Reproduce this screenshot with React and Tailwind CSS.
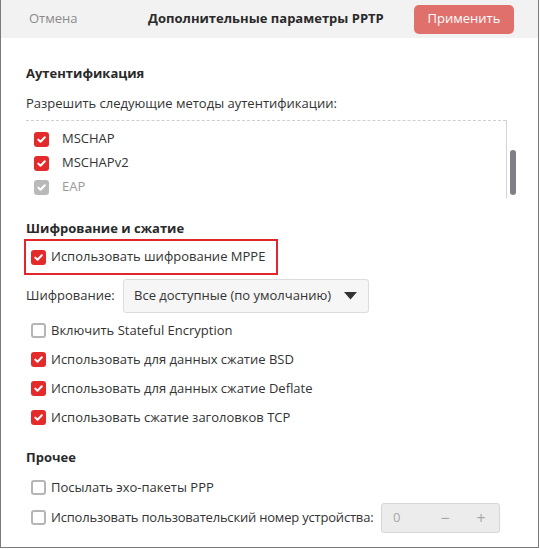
import React from "react";

function Check({ checked, disabled }) {
  if (!checked) {
    return <span className="inline-block w-[15px] h-[15px] rounded-[3px] border-2 border-[#b5b5b5] bg-white shrink-0" />;
  }
  return (
    <span className={`inline-flex items-center justify-center w-[15px] h-[15px] rounded-[3px] shrink-0 ${disabled ? "bg-[#b9b9b9]" : "bg-[#e32b2b]"}`}>
      <svg width="11" height="11" viewBox="0 0 11 11">
        <path d="M2.3 5.6 L4.5 7.8 L8.8 3.2" fill="none" stroke="white" strokeWidth="2" strokeLinecap="round" strokeLinejoin="round" />
      </svg>
    </span>
  );
}

function Row({ checked, children }) {
  return (
    <div className="flex items-center gap-[5px] h-[29px] whitespace-nowrap">
      <Check checked={checked} />
      <span>{children}</span>
    </div>
  );
}

export default function App() {
  return (
    <div className="w-[540px] h-[549px] bg-white" style={{ fontFamily: '"Open Sans", "Noto Sans", sans-serif' }}>
      <div className="w-[539px] h-[548px] border-l border-r border-b border-[#7a7a7a] flex flex-col text-[13px] text-[#333333] whitespace-nowrap">
        <div className="h-[38px] bg-[#f2f2f2] flex items-center pl-[28px]">
          <span className="text-[#8a8a8a] w-[119px]">Отмена</span>
          <span className="font-bold text-[13px] text-[#2a2a2a]">Дополнительные параметры PPTP</span>
          <span className="ml-auto mr-[24px] w-[100px] h-[29px] rounded-[5px] bg-[#e0706b] text-white text-[13px] flex items-center justify-center">Применить</span>
        </div>
        <div className="pl-[25px] pr-[20px]">
          <div className="font-bold text-[13px] text-[#2a2a2a] mt-[25px] leading-[20px]">Аутентификация</div>
          <div className="mt-[11px] leading-[18px]">Разрешить следующие методы аутентификации:</div>
          <div className="flex mt-[8px]">
            <div className="w-[480px] h-[78px] border-t border-dashed border-[#cfcfcf] pl-[8px] pt-[6px]">
              <div className="flex items-center gap-[13px] h-[24px]"><Check checked /><span>MSCHAP</span></div>
              <div className="flex items-center gap-[13px] h-[24px]"><Check checked /><span>MSCHAPv2</span></div>
              <div className="flex items-center gap-[13px] h-[24px] text-[#9a9a9a]"><Check checked disabled /><span>EAP</span></div>
            </div>
            <div className="w-px h-[78px] bg-[#d4d4d4]" />
            <div className="w-[6px] h-[45px] rounded-full bg-[#7e8086] ml-[3px] mt-[30px]" />
          </div>
          <div className="font-bold text-[13px] text-[#2a2a2a] mt-[20px] leading-[20px]">Шифрование и сжатие</div>
          <div className="w-[254px] h-[36px] border-2 border-[#e3262b] -ml-[2px] mt-[1px] flex items-center pl-[5px] gap-[5px]">
            <Check checked />
            <span>Использовать шифрование MPPE</span>
          </div>
          <div className="flex items-center mt-[4px]">
            <span className="w-[97px]">Шифрование:</span>
            <div className="w-[246px] h-[34px] rounded-[3px] border border-[#dcdcdc] bg-[#f6f6f6] flex items-center justify-between pl-[10px] pr-[11px]">
              <span>Все доступные (по умолчанию)</span>
              <svg width="13" height="8" viewBox="0 0 13 8"><path d="M0 0 H13 L6.5 7.5 Z" fill="#333" /></svg>
            </div>
          </div>
          <div className="mt-[3px] pl-[5px]">
            <Row>Включить Stateful Encryption</Row>
            <Row checked>Использовать для данных сжатие BSD</Row>
            <Row checked>Использовать для данных сжатие Deflate</Row>
            <Row checked>Использовать сжатие заголовков TCP</Row>
          </div>
          <div className="font-bold text-[13px] text-[#2a2a2a] mt-[15px] leading-[20px]">Прочее</div>
          <div className="mt-[6px] pl-[5px]">
            <Row>Посылать эхо-пакеты PPP</Row>
            <div className="flex items-center gap-[5px] h-[31px]">
              <Check />
              <span className="tracking-[-0.2px]">Использовать пользовательский номер устройства:</span>
              <div className="ml-auto mr-[18px] shrink-0 w-[119px] h-[30px] rounded-[3px] border border-[#d6d6d6] bg-[#ececec] flex items-center text-[#a8a8a8] pl-[11px]">
                <span className="flex-1">0</span>
                <span className="w-[36px] text-center text-[16px]">−</span>
                <span className="w-[36px] text-center text-[16px]">+</span>
              </div>
            </div>
          </div>
        </div>
      </div>
    </div>
  );
}
